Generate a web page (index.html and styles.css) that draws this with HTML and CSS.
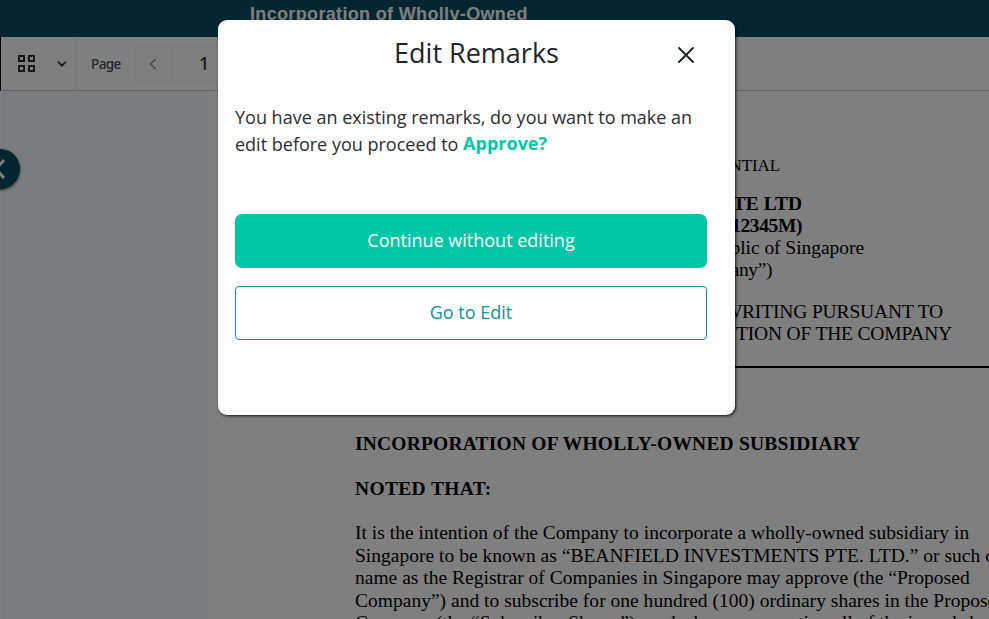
FILE: index.html
```html
<!DOCTYPE html>
<html lang="en">
<head>
<meta charset="utf-8">
<title>Edit Remarks</title>
<link rel="stylesheet" href="styles.css">
</head>
<body>
<div class="app">
  <header class="topbar"><h1 class="topbar-title">Incorporation of Wholly-Owned</h1></header>
  <nav class="toolbar">
    <div class="view-group">
      <svg class="grid-icon" width="20" height="20" viewBox="0 0 20 20" fill="none" stroke="#333" stroke-width="2"><path d="M2 2h5v5H2zM12 2h5v5h-5zM2 12h5v5H2zM12 12h5v5h-5z"/></svg>
      <svg class="caret" width="10" height="8" viewBox="0 0 10 8" fill="none" stroke="#333" stroke-width="1.7"><path d="M1 1.7 5 5.7 9 1.7"/></svg>
    </div>
    <span class="page-label">Page</span>
    <div class="pager">
      <div class="pager-prev"><svg width="8" height="12" viewBox="0 0 8 12" fill="none" stroke="#8c8c96" stroke-width="1.2"><path d="M6.5 1 1.5 6l5 5"/></svg></div>
      <span class="pager-num">1</span>
    </div>
  </nav>
  <main class="viewer">
    <aside class="thumbs"></aside>
    <article class="paper">
      <div class="doc-head">
        <p class="line conf">CONFIDENTIAL</p>
        <p class="line strong company">PTE LTD</p>
        <p class="line strong regno">12345M)</p>
        <p class="line origin">Republic of Singapore</p>
        <p class="line alias">Company”)</p>
        <p class="line writing">WRITING PURSUANT TO</p>
        <p class="line resolution">RESOLUTION OF THE COMPANY</p>
      </div>
      <hr class="rule">
      <div class="doc-body">
        <h2 class="heading h-inc">INCORPORATION OF WHOLLY-OWNED SUBSIDIARY</h2>
        <h2 class="heading h-noted">NOTED THAT:</h2>
        <p class="para">It is the intention of the Company to incorporate a wholly-owned subsidiary in<br>Singapore to be known as “BEANFIELD INVESTMENTS PTE. LTD.” or such other<br>name as the Registrar of Companies in Singapore may approve (the “Proposed<br>Company”) and to subscribe for one hundred (100) ordinary shares in the Proposed<br>Company (the “Subscriber Shares”), each share representing all of the issued share</p>
      </div>
    </article>
  </main>
  <div class="drawer-toggle"><svg width="12" height="24" viewBox="0 0 12 24" fill="none" stroke="#fff" stroke-width="3"><path d="M4 3-4 12l8 9"/></svg></div>
</div>
<div class="overlay">
  <section class="modal" role="dialog" aria-labelledby="dlg">
    <div class="modal-head">
      <h2 class="modal-title" id="dlg">Edit Remarks</h2>
      <button class="close" aria-label="Close"><svg width="18" height="18" viewBox="0 0 18 18" fill="none" stroke="#212529" stroke-width="2" stroke-linecap="round"><path d="m2 2 14 14M16 2 2 16"/></svg></button>
    </div>
    <p class="message">You have an existing remarks, do you want to make an<br>edit before you proceed to <strong>Approve?</strong></p>
    <div class="actions">
      <button class="btn primary">Continue without editing</button>
      <button class="btn outline">Go to Edit</button>
    </div>
  </section>
</div>
</body>
</html>
```
FILE: styles.css
```css
* { box-sizing: border-box; }
body { margin: 0; width: 989px; height: 619px; overflow: hidden; font-family: "Open Sans", sans-serif; }
h1, h2, p { margin: 0; }
svg { display: block; }
.app { position: relative; width: 989px; height: 619px; overflow: hidden; display: flex; flex-direction: column; background: #fff; }
.topbar { height: 37px; flex: none; background: #084c5e; padding: 3px 0 0 250px; }
.topbar-title { font: bold 18px/22px "Liberation Sans", sans-serif; letter-spacing: .34px; color: #fff; white-space: nowrap; }
.toolbar { height: 54px; flex: none; display: flex; align-items: center; background: #fff; border-bottom: 1px solid #ccc; border-left: 1px solid #000; }
.view-group { height: 53px; width: 76px; display: flex; align-items: center; border-right: 1px solid #e7e7f0; padding-left: 16px; }
.caret { margin-left: 20px; }
.page-label { width: 57px; padding-left: 14px; font: 500 13.5px/20px "Noto Sans", sans-serif; letter-spacing: -.6px; color: #485056; }
.pager { display: flex; width: 110px; height: 36px; border: 1px solid #eeeefa; border-radius: 4px; }
.pager-prev { width: 37px; display: flex; align-items: center; justify-content: center; border-right: 1px solid #eeeefa; }
.pager-num { padding-left: 27px; font: 500 18px/33px "Noto Sans", sans-serif; color: #333; }
.viewer { flex: 1; min-height: 0; display: flex; }
.thumbs { width: 208px; flex: none; border-left: 1px solid #fff; background: linear-gradient(90deg, #f5f7f9, #f7f9fc 35px); }
.paper { flex: 1; overflow: hidden; font-family: "Liberation Serif", serif; font-size: 19.5px; color: #000; }
.doc-head { height: 275px; padding-top: 64px; }
.line { height: 22px; line-height: 22px; text-align: right; white-space: nowrap; }
.strong { font-weight: bold; }
.conf { font-size: 17px; line-height: 21px; margin-bottom: 16px; padding-right: 209px; letter-spacing: -.1px; }
.company, .regno { padding-right: 187px; }
.regno { letter-spacing: -.4px; }
.origin { padding-right: 125px; letter-spacing: -.05px; }
.alias { padding-right: 217px; margin-bottom: 20px; letter-spacing: -.4px; }
.writing { padding-right: 46px; letter-spacing: -.15px; }
.resolution { padding-right: 37px; letter-spacing: -.18px; line-height: 21px; }
.rule { margin: 0 0 0 147px; height: 2px; border: 0; background: #000; }
.doc-body { padding: 65px 0 0 147px; white-space: nowrap; }
.heading { font-size: 19.5px; line-height: 22px; margin-bottom: 23px; }
.h-inc { letter-spacing: .2px; }
.h-noted { letter-spacing: .34px; margin-bottom: 22px; }
.para { line-height: 22.6px; letter-spacing: .015px; }
.drawer-toggle { position: absolute; left: -20px; top: 149px; width: 40px; height: 40px; border-radius: 50%; background: #084c5e; box-shadow: 0 1px 3px #555; padding: 8px 0 0 20px; }
.overlay { position: absolute; inset: 0; background: rgba(0, 0, 0, .5); }
.modal { position: absolute; left: 218px; top: 20px; width: 517px; height: 395px; background: #fff; border-radius: 9px; box-shadow: 1px 1px 3px rgba(0, 0, 0, .85); padding: 0 28px 0 17px; color: #212529; }
.modal-head { height: 84px; display: flex; justify-content: center; position: relative; padding-top: 14px; }
.modal-title { font-size: 27px; line-height: 38px; font-weight: 400; padding-left: 11px; }
.close { position: absolute; right: 12px; top: 26px; padding: 0; border: 0; background: none; }
.message { font-size: 18px; line-height: 27px; white-space: nowrap; color: #2d2d30; }
.message strong { position: relative; top: -1px; color: #00c7a6; font-weight: 700; }
.actions { display: flex; flex-direction: column; gap: 18px; margin-top: 56px; }
.btn { height: 54px; padding: 0 0 2px; font: 400 18px/27px "Open Sans", sans-serif; }
.primary { background: #02c7a6; color: #fff; border: 0; border-radius: 7px; font-weight: 500; }
.outline { background: #fff; color: #149191; border: 1px solid #149191; border-radius: 4px; }
```
